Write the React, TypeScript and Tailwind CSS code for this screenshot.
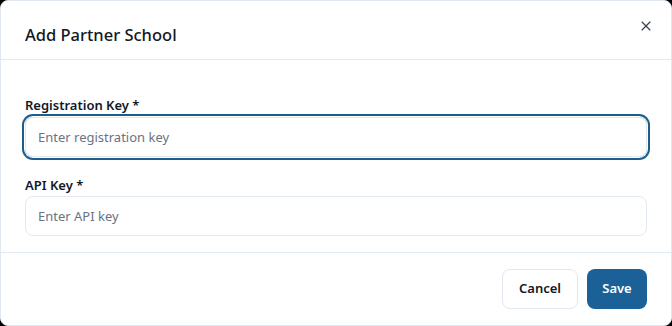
import { X } from "lucide-react";

export default function App() {
  return (
    <div className="h-[326px] w-[672px] bg-black" style={{ fontFamily: '"Noto Sans", "Open Sans", sans-serif' }}>
      <div className="relative flex h-full w-full flex-col overflow-hidden rounded-lg border border-[#e2e8f0] bg-white text-[#111827]">
        <div className="flex h-[59px] shrink-0 items-center border-b border-[#e2e8f0] px-6 pt-[10px]">
          <h2 className="text-[16.5px] font-medium leading-7">Add Partner School</h2>
        </div>
        <button className="absolute right-[17px] top-[17px] text-[#374151]">
          <X size={16} strokeWidth={1.75} />
        </button>

        <div className="flex flex-1 flex-col px-6 pt-[35px]">
          <label className="text-[13px] font-semibold leading-5">Registration Key *</label>
          <input
            autoFocus
            placeholder="Enter registration key"
            className="mt-0.5 h-10 w-full rounded-lg border border-[#e2e8f0] px-3 text-[13px] text-[#111827] outline-none ring-2 ring-[#1b5e8c] ring-offset-1 placeholder:text-[#6b7280]"
          />
          <label className="mt-[18px] text-[13px] font-semibold leading-5">API Key *</label>
          <input
            placeholder="Enter API key"
            className="mt-px h-10 w-full rounded-lg border border-[#e2e8f0] px-3 text-[13px] text-[#111827] outline-none placeholder:text-[#6b7280]"
          />
        </div>

        <div className="flex h-[73px] shrink-0 items-start justify-end gap-[9px] border-t border-[#e2e8f0] px-6 pt-4">
          <button className="h-10 w-[76px] rounded-lg border border-[#e2e8f0] bg-white text-[13px] font-semibold text-[#111827]">
            Cancel
          </button>
          <button className="h-10 w-[60px] rounded-lg bg-[#1b6197] text-[13px] font-semibold text-white">Save</button>
        </div>
      </div>
    </div>
  );
}
